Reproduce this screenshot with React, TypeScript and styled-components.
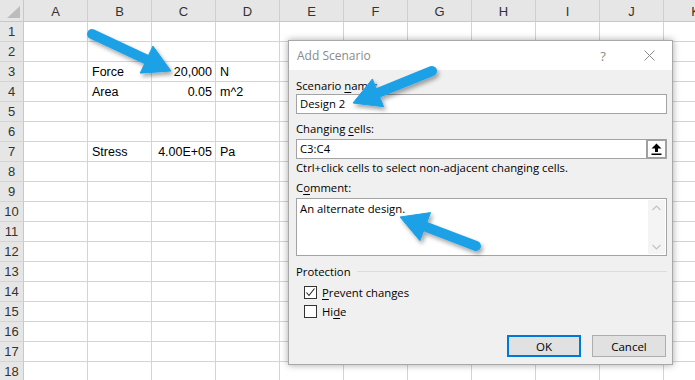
import React from 'react';
import styled, { createGlobalStyle } from 'styled-components';

const GlobalStyle = createGlobalStyle`
  html, body {
    margin: 0;
    padding: 0;
    background: #ffffff;
  }
  body {
    font-family: "Liberation Sans", Arial, sans-serif;
  }
`;

const uiFont = `"Open Sans", "Noto Sans", sans-serif`;
const cellFont = `"Liberation Sans", Arial, sans-serif`;

const COLUMNS = ['A', 'B', 'C', 'D', 'E', 'F', 'G', 'H', 'I', 'J', 'K'];
const ROWS = Array.from({ length: 18 }, (_, i) => i + 1);

const CELLS: Record<string, { text: string; right?: boolean }> = {
  B3: { text: 'Force' },
  C3: { text: '20,000', right: true },
  D3: { text: 'N' },
  B4: { text: 'Area' },
  C4: { text: '0.05', right: true },
  D4: { text: 'm^2' },
  B7: { text: 'Stress' },
  C7: { text: '4.00E+05', right: true },
  D7: { text: 'Pa' },
};

const Page = styled.div`
  position: relative;
  width: 695px;
  height: 380px;
  overflow: hidden;
  background: #ffffff;
`;

const Sheet = styled.div`
  display: grid;
  grid-template-columns: 24px repeat(11, 64px);
  grid-template-rows: 22px;
  grid-auto-rows: 20px;
`;

const Corner = styled.div`
  position: relative;
  background: #e6e6e6;
  border-right: 1px solid #c8c8c8;
  border-bottom: 1px solid #c8c8c8;
  box-sizing: border-box;

  &::after {
    content: '';
    position: absolute;
    right: 3px;
    bottom: 3px;
    width: 0;
    height: 0;
    border-left: 13px solid transparent;
    border-bottom: 12px solid #bcbcbc;
  }
`;

const ColHeader = styled.div`
  display: flex;
  align-items: center;
  justify-content: center;
  background: #e6e6e6;
  border-right: 1px solid #cfcfcf;
  border-bottom: 1px solid #c8c8c8;
  box-sizing: border-box;
  font-family: ${cellFont};
  font-size: 13px;
  color: #333;
  padding-top: 1px;
`;

const RowHeader = styled.div`
  display: flex;
  align-items: center;
  justify-content: center;
  background: #e6e6e6;
  border-right: 1px solid #c8c8c8;
  border-bottom: 1px solid #d4d4d4;
  box-sizing: border-box;
  font-family: ${cellFont};
  font-size: 13px;
  color: #333;
`;

const Cell = styled.div<{ $right?: boolean }>`
  display: flex;
  align-items: center;
  justify-content: ${(p) => (p.$right ? 'flex-end' : 'flex-start')};
  padding: 1px 3px 0 4px;
  border-right: 1px solid #d4d4d4;
  border-bottom: 1px solid #d4d4d4;
  box-sizing: border-box;
  font-family: ${cellFont};
  font-size: 12.5px;
  color: #000;
  white-space: nowrap;
`;

/* ---------- dialog ---------- */

const Dialog = styled.div`
  position: absolute;
  left: 288px;
  top: 40px;
  width: 385px;
  height: 325px;
  box-sizing: border-box;
  border: 1px solid #a8a8a8;
  background: #f0f0f0;
  box-shadow: 0 0 7px rgba(0, 0, 0, 0.35);
  display: flex;
  flex-direction: column;
  font-family: ${uiFont};
  font-size: 11.3px;
  color: #000;
`;

const TitleBar = styled.div`
  height: 29px;
  background: #ffffff;
  display: flex;
  align-items: center;
  padding-left: 8px;
`;

const Title = styled.div`
  flex: 1;
  font-size: 12px;
  color: #8a8a8a;
`;

const TitleButton = styled.div<{ $w: number }>`
  width: ${(p) => p.$w}px;
  height: 29px;
  display: flex;
  align-items: center;
  justify-content: center;
  color: #8a8a8a;
  font-size: 13px;
`;

const Body = styled.div`
  display: flex;
  flex-direction: column;
  padding: 0 5px 8px 7px;
`;

const Label = styled.div<{ $mt: number }>`
  margin-top: ${(p) => p.$mt}px;
  height: 16px;
  line-height: 16px;
  white-space: nowrap;
`;

const Key = styled.span`
  text-decoration: underline;
  text-underline-offset: 2px;
`;

const Field = styled.div<{ $mt?: number }>`
  margin-top: ${(p) => p.$mt ?? 0}px;
  height: 20px;
  box-sizing: border-box;
  border: 1px solid #a3a3a3;
  background: #ffffff;
  display: flex;
  align-items: center;
  padding-left: 3px;
`;

const FieldText = styled.div`
  flex: 1;
  line-height: 16px;
`;

const RefButton = styled.div`
  width: 21px;
  height: 20px;
  margin: -1px -1px -1px 0;
  box-sizing: border-box;
  border: 2px solid #a0a0a0;
  background: #fdfdfd;
  display: flex;
  align-items: center;
  justify-content: center;
`;

const CommentBox = styled.div`
  margin-top: 2px;
  height: 58px;
  box-sizing: border-box;
  border: 1px solid #a3a3a3;
  background: #ffffff;
  display: flex;
`;

const CommentText = styled.div`
  flex: 1;
  padding: 2px 3px;
  line-height: 16px;
`;

const ScrollTrack = styled.div`
  width: 17px;
  margin: 1px 1px 1px 0;
  background: #f4f4f4;
  display: flex;
  flex-direction: column;
  justify-content: space-between;
  align-items: center;
  padding: 5px 0 4px;
`;

const GroupHeader = styled.div`
  margin-top: 7px;
  height: 16px;
  display: flex;
  align-items: center;
  gap: 6px;
`;

const GroupLine = styled.div`
  flex: 1;
  height: 1px;
  background: #dcdcdc;
`;

const CheckRow = styled.div<{ $mt: number }>`
  margin-top: ${(p) => p.$mt}px;
  height: 16px;
  display: flex;
  align-items: center;
  padding-left: 8px;
  gap: 5px;
`;

const Box = styled.div`
  width: 13px;
  height: 13px;
  box-sizing: border-box;
  border: 1px solid #333333;
  background: #ffffff;
  display: flex;
  align-items: center;
  justify-content: center;
`;

const ButtonRow = styled.div`
  margin-top: 16px;
  display: flex;
  justify-content: flex-end;
  gap: 11px;
  padding-right: 1px;
`;

const Button = styled.div<{ $primary?: boolean }>`
  width: 74px;
  height: 22px;
  box-sizing: border-box;
  border: ${(p) => (p.$primary ? '2px solid #0078d7' : '1px solid #adadad')};
  background: #e1e1e1;
  display: flex;
  align-items: center;
  justify-content: center;
  font-size: 11.5px;
`;

/* ---------- arrows ---------- */

const Overlay = styled.svg`
  position: absolute;
  left: 0;
  top: 0;
  pointer-events: none;
`;

type Pt = [number, number];

const arrowParts = (tail: Pt, tip: Pt, headLen = 27, halfW = 15) => {
  const dx = tip[0] - tail[0];
  const dy = tip[1] - tail[1];
  const len = Math.hypot(dx, dy);
  const ux = dx / len;
  const uy = dy / len;
  const bx = tip[0] - ux * headLen;
  const by = tip[1] - uy * headLen;
  const nx = -uy;
  const ny = ux;
  const head = `${tip[0]},${tip[1]} ${bx + nx * halfW},${by + ny * halfW} ${bx - nx * halfW},${by - ny * halfW}`;
  return { bx: bx + ux * 4, by: by + uy * 4, head };
};

const Arrow: React.FC<{ tail: Pt; tip: Pt }> = ({ tail, tip }) => {
  const { bx, by, head } = arrowParts(tail, tip);
  return (
    <g filter="url(#arrowShadow)">
      <line x1={tail[0]} y1={tail[1]} x2={bx} y2={by} stroke="#1ea1e7" strokeWidth={10} strokeLinecap="round" />
      <polygon points={head} fill="#1ea1e7" strokeLinejoin="round" stroke="#1ea1e7" strokeWidth={1} />
    </g>
  );
};

const App: React.FC = () => {
  return (
    <Page>
      <GlobalStyle />
      <Sheet>
        <Corner />
        {COLUMNS.map((c) => (
          <ColHeader key={c}>{c}</ColHeader>
        ))}
        {ROWS.map((r) => (
          <React.Fragment key={r}>
            <RowHeader>{r}</RowHeader>
            {COLUMNS.map((c) => {
              const cell = CELLS[`${c}${r}`];
              return (
                <Cell key={c} $right={cell?.right}>
                  {cell?.text}
                </Cell>
              );
            })}
          </React.Fragment>
        ))}
      </Sheet>

      <Dialog>
        <TitleBar>
          <Title>Add Scenario</Title>
          <TitleButton $w={46}>?</TitleButton>
          <TitleButton $w={46}>
            <svg width="11" height="11" viewBox="0 0 11 11">
              <path d="M0.5 0.5 L10.5 10.5 M10.5 0.5 L0.5 10.5" stroke="#8a8a8a" strokeWidth="1" />
            </svg>
          </TitleButton>
        </TitleBar>
        <Body>
          <Label $mt={8}>
            Scenario <Key>n</Key>ame:
          </Label>
          <Field>
            <FieldText>Design 2</FieldText>
          </Field>
          <Label $mt={7}>
            Changing <Key>c</Key>ells:
          </Label>
          <Field $mt={2}>
            <FieldText>C3:C4</FieldText>
            <RefButton>
              <svg width="11" height="12" viewBox="0 0 11 12">
                <path d="M5.5 0.5 L10.5 5.5 L7 5.5 L7 9 L4 9 L4 5.5 L0.5 5.5 Z" fill="#000" />
                <rect x="0.5" y="10.5" width="10" height="1.5" fill="#000" />
              </svg>
            </RefButton>
          </Field>
          <Label $mt={1}>Ctrl+click cells to select non-adjacent changing cells.</Label>
          <Label $mt={4}>
            C<Key>o</Key>mment:
          </Label>
          <CommentBox>
            <CommentText>An alternate design.</CommentText>
            <ScrollTrack>
              <svg width="9" height="6" viewBox="0 0 9 6">
                <path d="M0.5 5 L4.5 1 L8.5 5" fill="none" stroke="#c2c2c2" strokeWidth="1.2" />
              </svg>
              <svg width="9" height="6" viewBox="0 0 9 6">
                <path d="M0.5 1 L4.5 5 L8.5 1" fill="none" stroke="#c2c2c2" strokeWidth="1.2" />
              </svg>
            </ScrollTrack>
          </CommentBox>
          <GroupHeader>
            Protection
            <GroupLine />
          </GroupHeader>
          <CheckRow $mt={5}>
            <Box>
              <svg width="11" height="11" viewBox="0 0 11 11">
                <path d="M1.5 5.5 L4 8.5 L9.5 1.5" fill="none" stroke="#222" strokeWidth="1.1" />
              </svg>
            </Box>
            <span>
              <Key>P</Key>revent changes
            </span>
          </CheckRow>
          <CheckRow $mt={3}>
            <Box />
            <span>
              Hi<Key>d</Key>e
            </span>
          </CheckRow>
          <ButtonRow>
            <Button $primary>OK</Button>
            <Button>Cancel</Button>
          </ButtonRow>
        </Body>
      </Dialog>

      <Overlay width="695" height="380" viewBox="0 0 695 380">
        <defs>
          <filter id="arrowShadow" x="-30%" y="-30%" width="160%" height="160%">
            <feDropShadow dx="2" dy="3" stdDeviation="2" floodColor="#000" floodOpacity="0.35" />
          </filter>
        </defs>
        <Arrow tail={[92, 34]} tip={[171, 71]} />
        <Arrow tail={[432, 71]} tip={[353, 103]} />
        <Arrow tail={[476, 246]} tip={[400, 217]} />
      </Overlay>
    </Page>
  );
};

export default App;
